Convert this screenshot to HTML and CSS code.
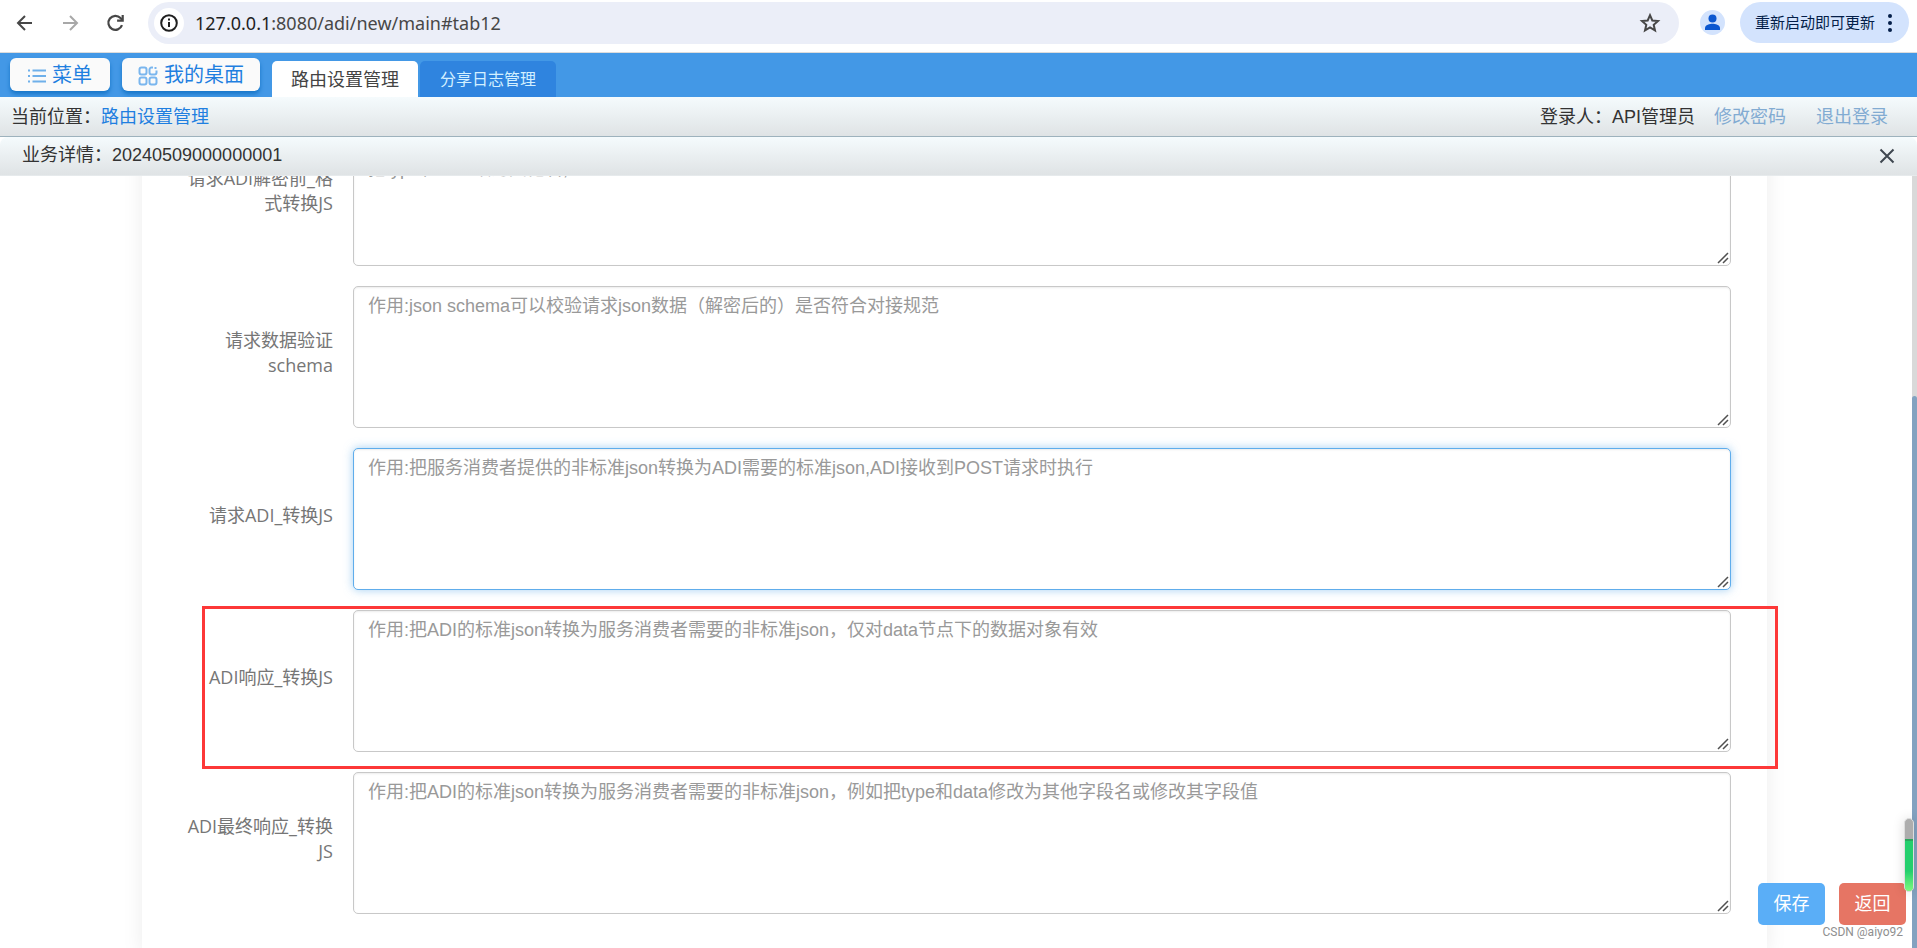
FILE: index.html
```html
<!DOCTYPE html>
<html lang="zh-CN">
<head>
<meta charset="utf-8">
<title>路由设置管理</title>
<link rel="stylesheet" href="styles.css">
</head>
<body>
<div class="page">
  <div class="toolbar">
    <button class="tool" aria-label="后退"><svg width="24" height="24" viewBox="0 0 24 24" fill="none" stroke="#474747" stroke-width="2"><path d="M19 12H5M12 5L5 12l7 7"/></svg></button>
    <button class="tool" aria-label="前进"><svg width="24" height="24" viewBox="0 0 24 24" fill="none" stroke="#a8a8a8" stroke-width="2"><path d="M5 12h14M12 5l7 7-7 7"/></svg></button>
    <button class="tool" aria-label="刷新"><svg width="24" height="24" viewBox="0 0 24 24" fill="none" stroke="#474747" stroke-width="2.200"><path d="M19 14.200A7 7 0 1 1 17.500 7l2 2"/><path d="M19.700 4v5.600h-5.600"/></svg></button>
    <div class="address">
      <button class="info" aria-label="网站信息"><svg width="20" height="20" viewBox="0 0 20 20" fill="none" stroke="#1f1f1f" stroke-width="2"><circle cx="10" cy="10" r="7.800"/><path d="M10 9v5M10 5.600v2"/></svg></button>
      <span class="url">127.0.0.1<span class="path">:8080/adi/new/main#tab12</span></span>
      <button class="star" aria-label="收藏"><svg width="24" height="24" viewBox="0 0 24 24" fill="none" stroke="#474747" stroke-width="2"><path d="M12 4.200l2.300 5.300 5.700.5-4.300 3.800 1.300 5.600-5-3-5 3 1.300-5.600L4 10l5.700-.5z"/></svg></button>
    </div>
    <button class="avatar" aria-label="用户"><svg width="25" height="25" viewBox="0 0 25 25"><circle cx="12.500" cy="12.500" r="12.500" fill="#d3e3fd"/><circle cx="12.500" cy="8.500" r="4" fill="#0b57d0"/><path d="M5 20v-2c0-3 5-4.200 7.500-4.200S20 15 20 18v2z" fill="#0b57d0"/></svg></button>
    <button class="update">重新启动即可更新<svg width="4" height="18" viewBox="0 0 4 18" fill="#041e49"><circle cx="2" cy="2" r="2"/><circle cx="2" cy="9" r="2"/><circle cx="2" cy="16" r="2"/></svg></button>
  </div>

  <nav class="nav">
    <button class="navbtn menu"><svg width="18" height="16" viewBox="0 0 18 16" fill="none" stroke="#6fb0ea" stroke-width="2"><path d="M4.500 2.500H18M4.500 8H18M4.500 13.500H18M0 2.500h2M0 8h2M0 13.500h2"/></svg>菜单</button>
    <button class="navbtn"><svg width="20" height="20" viewBox="0 0 20 20" fill="none" stroke="#7ab6ee" stroke-width="2"><rect x="1.500" y="1.500" width="7" height="7" rx="2"/><path d="M15 1.500h-1.500a2 2 0 0 0-2 2v3a2 2 0 0 0 2 2h3a2 2 0 0 0 2-2V4.500M17.500 1v2"/><rect x="1.500" y="11.500" width="7" height="7" rx="2"/><rect x="11.500" y="11.500" width="7" height="7" rx="2"/></svg>我的桌面</button>
    <div class="tabs">
      <button class="tab active">路由设置管理</button>
      <button class="tab">分享日志管理</button>
    </div>
  </nav>

  <div class="crumbs">
    <span class="where">当前位置：<a class="here" href="#tab12">路由设置管理</a></span>
    <span class="user">登录人：API管理员</span>
    <a class="act" href="#password">修改密码</a>
    <a class="act" href="#logout">退出登录</a>
  </div>

  <div class="dialog-head">
    <span class="dialog-title">业务详情：20240509000000001</span>
    <button class="close" aria-label="关闭"><svg width="16" height="16" viewBox="0 0 16 16" stroke="#3f4750" stroke-width="2"><path d="M1.500 1.500l13 13M14.500 1.500l-13 13"/></svg></button>
  </div>

  <main class="body">
    <form class="panel">
      <div class="row">
        <label for="f1">请求ADI解密前_格式转换JS</label>
        <textarea id="f1" placeholder="作用:把服务消费者提供的非标准请求数据转换为ADI需要的格式,&#10;把type和data改为其他名,"></textarea>
      </div>
      <div class="row">
        <label for="f2">请求数据验证schema</label>
        <textarea id="f2" placeholder="作用:json schema可以校验请求json数据（解密后的）是否符合对接规范"></textarea>
      </div>
      <div class="row">
        <label for="f3">请求ADI_转换JS</label>
        <textarea id="f3" class="focused" placeholder="作用:把服务消费者提供的非标准json转换为ADI需要的标准json,ADI接收到POST请求时执行"></textarea>
      </div>
      <div class="row marked">
        <label for="f4">ADI响应_转换JS</label>
        <textarea id="f4" placeholder="作用:把ADI的标准json转换为服务消费者需要的非标准json，仅对data节点下的数据对象有效"></textarea>
      </div>
      <div class="row">
        <label for="f5">ADI最终响应_转换JS</label>
        <textarea id="f5" placeholder="作用:把ADI的标准json转换为服务消费者需要的非标准json，例如把type和data修改为其他字段名或修改其字段值"></textarea>
      </div>
    </form>
    <div class="scrollbar"><div class="thumb"></div></div>
    <div class="actions">
      <button class="btn save">保存</button>
      <button class="btn back">返回</button>
    </div>
    <div class="gauge"><div class="level"></div></div>
    <span class="watermark">CSDN @aiyo92</span>
  </main>
</div>
</body>
</html>
```
FILE: styles.css
```css
* { box-sizing: border-box; }
body { margin: 0; font: 18px/25px "Liberation Sans", "Noto Sans CJK SC", sans-serif; color: #333; background: #fff; }
button { font: inherit; border: 0; padding: 0; background: none; }
svg { display: block; flex: none; }
a { text-decoration: none; }
.page { height: 100vh; display: flex; flex-direction: column; overflow: hidden; }

.toolbar { display: flex; align-items: center; height: 53px; padding: 0 8px 7px 13px; border-bottom: 1px solid #dcdcdc; flex: none; }
.tool { margin-right: 21px; }
.address { flex: 1; display: flex; align-items: center; height: 42px; border-radius: 21px; background: #ebeef8; padding: 0 17px 0 6px; }
.info { width: 30px; height: 30px; border-radius: 50%; background: #fff; display: grid; place-items: center; margin-right: 11px; }
.url { flex: 1; font: 18px/24px "Noto Sans", sans-serif; color: #1f1f1f; }
.path { color: #474747; }
.avatar { margin: 0 15px 0 21px; }
.update { display: flex; align-items: center; gap: 13px; height: 41px; padding: 0 17px 0 15px; border-radius: 21px; background: #d3e3fd; color: #041e49; font-size: 15px; }

.nav { display: flex; align-items: flex-start; height: 44px; padding: 5px 10px 0; background: #4398e6; flex: none; }
.navbtn { display: flex; align-items: center; gap: 6px; height: 33px; padding: 2px 16px 0; margin-right: 12px; border-radius: 6px; background: #fafafa; color: #1f7fe0; font-size: 20px; box-shadow: 0 3px 4px #1676c8; }
.navbtn.menu { padding: 2px 18px 0; }
.tabs { display: flex; align-self: flex-end; gap: 2px; }
.tab { height: 36px; padding: 0 20px; border-radius: 5px 5px 0 0; background: #2f84df; color: #d3f0ff; font-size: 16px; }
.tab.active { background: #fff; color: #444; font-size: 18px; padding: 2px 19px 0; }

.crumbs { display: flex; align-items: center; height: 40px; padding: 2px 29px 0 11px; background: linear-gradient(#f5fbfd, #dfe3e5); border-bottom: 1px solid #9db2bd; flex: none; }
.where { flex: 1; }
.here { color: #1f7fe0; }
.act { color: #82abd2; margin-left: 19px; }
.act + .act { margin-left: 30px; }

.dialog-head { display: flex; align-items: center; justify-content: space-between; height: 39px; padding: 0 22px; background: linear-gradient(#f5fbfd, #dfe3e5); border-bottom: 1px solid #e6eaec; border-radius: 8px 8px 0 0; flex: none; }
.dialog-title { padding-bottom: 2px; }

.body { position: relative; flex: 1; min-height: 0; overflow: hidden; }
.panel { display: flex; flex-direction: column; gap: 20px; margin: -52px 150px 0 142px; padding: 0 36px 40px 43px; box-shadow: 0 0 20px rgba(0, 0, 0, 0.08); }
.row { position: relative; display: flex; align-items: center; gap: 20px; }
.row label { width: 148px; padding-bottom: 8px; text-align: right; color: #767676; font-family: "Open Sans", "Noto Sans CJK SC", sans-serif; word-break: break-word; }
.row textarea { flex: 1; height: 142px; padding: 7px 14px; border: 1px solid #c8c8c8; border-radius: 5px; background: #fff; font: inherit; box-shadow: inset 0 1px 2px rgba(0, 0, 0, 0.08); resize: both; outline: 0; }
.row textarea::placeholder { color: #999; }
.row textarea::-webkit-resizer { background: url("data:image/svg+xml,%3Csvg xmlns='http://www.w3.org/2000/svg' width='15' height='15' viewBox='0 0 15 15' fill='none' stroke='%23505050' stroke-width='1.5'%3E%3Cpath d='M3 13L13 3M8 13l5-5'/%3E%3C/svg%3E") no-repeat right bottom; }
.row textarea.focused { border-color: #5fadec; box-shadow: inset 0 1px 2px rgba(0, 0, 0, 0.08), 0 0 10px rgba(102, 175, 233, 0.6); }
.marked::after { content: ""; position: absolute; inset: -4px -47px -17px 17px; border: 3px solid #fd3838; pointer-events: none; }

.scrollbar { position: absolute; top: 0; right: 0; bottom: 0; width: 5px; background: #d9d9d9; padding-top: 220px; }
.thumb { height: 100%; background: #83a2c0; border-radius: 3px 3px 0 0; }
.actions { position: absolute; right: 11px; bottom: 23px; display: flex; gap: 14px; }
.btn { width: 67px; height: 42px; border-radius: 5px; color: #fff; }
.save { background: #5aaef7; }
.back { background: #e67564; }
.gauge { position: absolute; right: 3px; bottom: 56px; width: 10px; height: 74px; padding-top: 20px; border: 1px solid #ddd; border-radius: 5px; background: #adadad; overflow: hidden; box-shadow: 0 0 12px rgba(0, 0, 0, 0.15); }
.level { height: 100%; border-top: 2px solid #2aa75c; background: linear-gradient(#24cf6d 60%, #7dfb7f); }
.watermark { position: absolute; right: 14px; bottom: 6px; font: 12px/20px Roboto, sans-serif; color: #8f8f8f; }
```
